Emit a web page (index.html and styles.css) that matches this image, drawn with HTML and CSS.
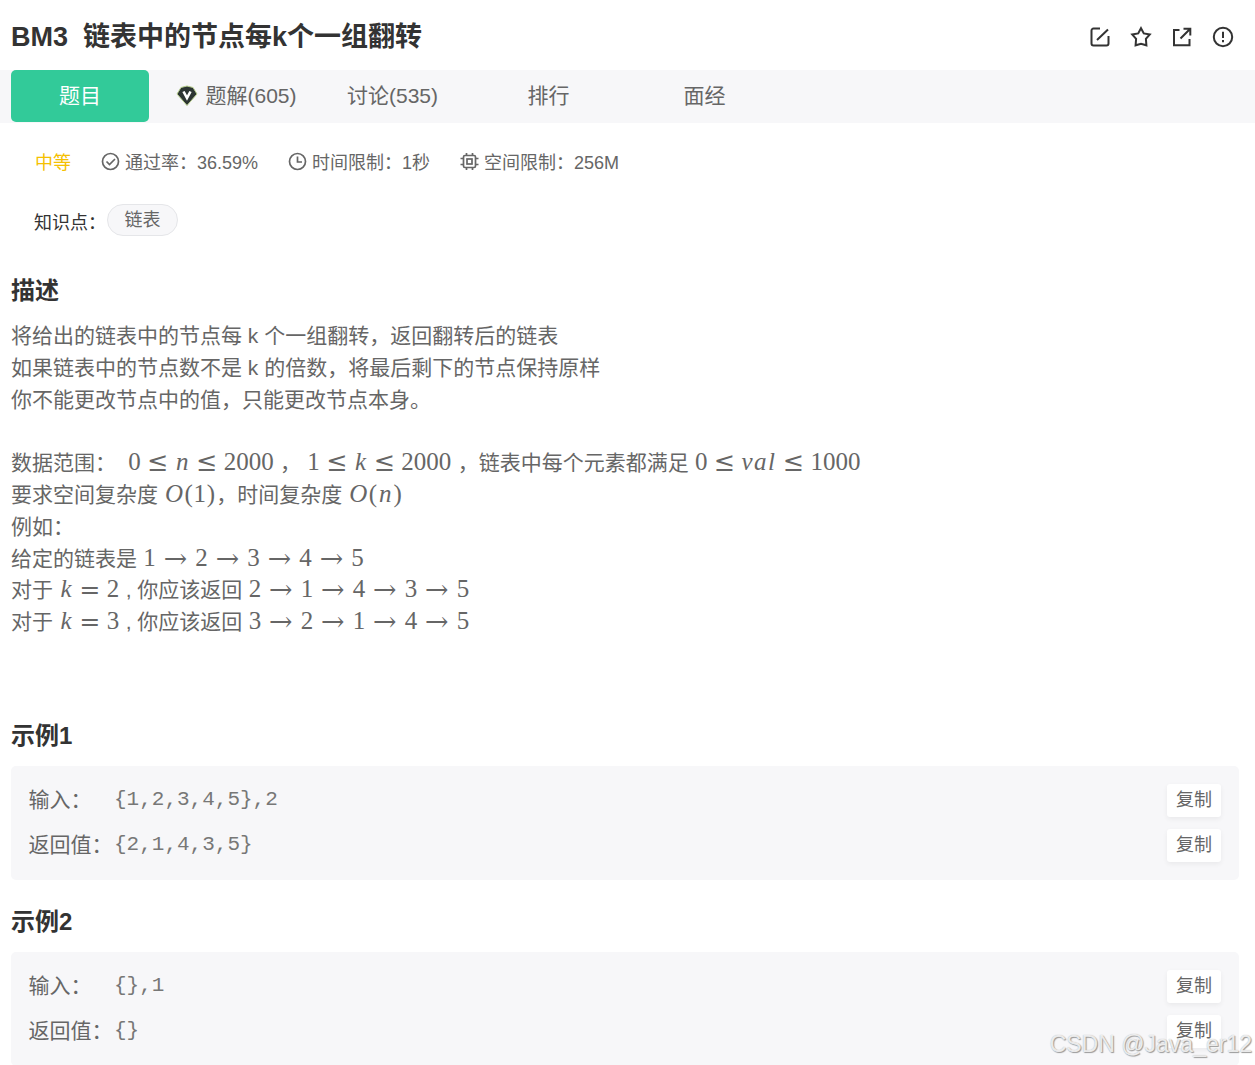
FILE: index.html
```html
<!DOCTYPE html>
<html lang="zh-CN">
  <head>
    <title>BM3 链表中的节点每k个一组翻转</title>
    <meta charset="utf-8">
    <link rel="stylesheet" href="styles.css">
  </head>
  <body>

  <div class="header">
    <h1>BM3&nbsp; 链表中的节点每k个一组翻转</h1>
    <div class="actions">
      <svg width="22" height="22" viewBox="0 0 22 22"><path d="M11 2.5H4.5a2 2 0 0 0-2 2v13a2 2 0 0 0 2 2h13a2 2 0 0 0 2-2V10M8 14L19 3.5"/></svg>
      <svg width="22" height="22" viewBox="0 0 22 22"><path d="M11 2.2l2.8 5.2 6 1.1-3.9 4.4.5 6.4-5.4-1.5-5.4 1.5.5-6.4-3.9-4.4 6-1.1z"/></svg>
      <svg width="22" height="22" viewBox="0 0 22 22"><path d="M8.5 4H3v15.3h15.5V13M12.5 2.7h6.8v6.8M19 3L9.5 12.5"/></svg>
      <svg width="22" height="22" viewBox="0 0 22 22"><circle cx="11" cy="11" r="9.2"/><path d="M11 5.800v6.200M11 14v2.200"/></svg>
    </div>
  </div>

  <div class="tabs">
    <span class="tab active">题目</span>
    <span class="tab">
      <svg class="gem" width="22" height="22" viewBox="0 0 22 22"><path fill="#2d3533" stroke="#b8cf8f" d="M5 2.500L11 1l6 1.500L21 9 11 20.500 1 9z"/><path fill="none" stroke="#fff" stroke-width="2.600" d="M7.500 6.500L11 13l3.500-6.500"/></svg>
      题解(605)
    </span>
    <span class="tab">讨论(535)</span>
    <span class="tab">排行</span>
    <span class="tab">面经</span>
  </div>

  <div class="meta">
    <span class="level">中等</span>
    <span class="item">
      <svg width="19" height="19" viewBox="0 0 19 19"><circle cx="9.5" cy="9.5" r="8"/><path d="M5.5 9.5l3 3 5.5-5.5"/></svg>
      通过率：36.59%
    </span>
    <span class="item">
      <svg width="19" height="19" viewBox="0 0 19 19"><circle cx="9.5" cy="9.5" r="8"/><path d="M9.5 4.500v5.500h4.500"/></svg>
      时间限制：1秒
    </span>
    <span class="item">
      <svg width="19" height="19" viewBox="0 0 19 19"><rect x="3.5" y="3.5" width="12" height="12" rx="1.5"/><rect x="7" y="7" width="5" height="5"/><path d="M6.5 1v2M12.5 1v2M6.5 16v2M12.5 16v2M.5 6.500h2.500M.5 12.500h2.500M16 6.500h2.500M16 12.500h2.500"/></svg>
      空间限制：256M
    </span>
  </div>

  <div class="points">
    <span>知识点：</span>
    <span class="tag">链表</span>
  </div>

  <h2>描述</h2>
  <div class="desc">
    <p>将给出的链表中的节点每 k 个一组翻转，返回翻转后的链表</p>
    <p>如果链表中的节点数不是 k 的倍数，将最后剩下的节点保持原样</p>
    <p>你不能更改节点中的值，只能更改节点本身。</p>
    <p>&nbsp;</p>
    <!-- formulas -->
    <p>数据范围：&nbsp; <span class="math">0<b>≤</b><i class="n">n</i><b>≤</b>2000</span> ， <span class="math">1<b>≤</b><i class="k">k</i><b>≤</b>2000</span> ，链表中每个元素都满足 <span class="math">0<b>≤</b><i class="val">val</i><b>≤</b>1000</span></p>
    <p>要求空间复杂度 <span class="math"><i class="o">O</i><em>(</em>1<em>)</em></span>，时间复杂度 <span class="math"><i class="o">O</i><em>(</em><i class="n">n</i><em>)</em></span></p>
    <p>例如：</p>
    <p>给定的链表是 <span class="math">1<u>→</u>2<u>→</u>3<u>→</u>4<u>→</u>5</span></p>
    <p>对于 <span class="math"><i class="k">k</i><b>=</b>2</span> , 你应该返回 <span class="math">2<u>→</u>1<u>→</u>4<u>→</u>3<u>→</u>5</span></p>
    <p>对于 <span class="math"><i class="k">k</i><b>=</b>3</span> , 你应该返回 <span class="math">3<u>→</u>2<u>→</u>1<u>→</u>4<u>→</u>5</span></p>
  </div>

  <h2>示例1</h2>
  <div class="sample">
    <div class="row"><span class="label">输入：</span><code>{1,2,3,4,5},2</code><span class="copy">复制</span></div>
    <div class="row"><span class="label">返回值：</span><code>{2,1,4,3,5}</code><span class="copy">复制</span></div>
  </div>

  <h2>示例2</h2>
  <div class="sample">
    <div class="row"><span class="label">输入：</span><code>{},1</code><span class="copy">复制</span></div>
    <div class="row"><span class="label">返回值：</span><code>{}</code><span class="copy">复制</span></div>
  </div>

  <div class="watermark">CSDN @Java_er12</div>

  </body>
</html>
```
FILE: styles.css
```css
html {
  height: 100%;
}
body {
  margin: 0;
  height: 1065px;
  overflow: hidden;
  position: relative;
  background: #fff;
  color: #666;
  font-family: "Liberation Sans", "Noto Sans CJK SC", sans-serif;
  font-size: 21px;
}

svg {
  flex: none;
  fill: none;
  stroke: #333;
  stroke-width: 2;
}

.header {
  display: flex;
  justify-content: space-between;
  align-items: center;
  height: 70px;
  padding: 3px 21.5px 0 11px;
  box-sizing: border-box;
}
h1 {
  margin: 0;
  color: #333;
  font-size: 27px;
  line-height: 40px;
}
.actions {
  display: flex;
  gap: 18.7px;
}

.tabs {
  display: flex;
  gap: 18px;
  height: 53px;
  padding-left: 11px;
  background: #f7f7f9;
}
.tab {
  display: flex;
  justify-content: center;
  align-items: center;
  gap: 7px;
  width: 139px;
  margin-right: -1px;
  height: 52px;
  padding-bottom: 4px;
  box-sizing: border-box;
  white-space: nowrap;
}
.tab.active {
  width: 138px;
  margin-right: 0;
  background: #32ca99;
  border-radius: 5px;
  color: #fff;
}
.gem {
  stroke-width: 1;
  margin-top: 4px;
}

.meta {
  display: flex;
  align-items: center;
  height: 23px;
  margin-top: 26px;
  padding: 0 0 4px 35px;
  gap: 30px;
  font-size: 18px;
}
.meta .item {
  display: flex;
  align-items: center;
  gap: 5px;
}
.meta svg {
  stroke: #666;
  stroke-width: 1.7;
  margin-top: 1px;
}
.level {
  color: #f5c000;
}

.points {
  display: flex;
  align-items: flex-start;
  height: 38px;
  margin: 28px 0 7px;
  padding-left: 34px;
  font-size: 18px;
  line-height: 38px;
  color: #333;
}
.tag {
  width: 69px;
  height: 30px;
  margin-left: 1px;
  border: 1px solid #e5e6e9;
  border-radius: 16px;
  background: #f7f7f9;
  color: #666;
  line-height: 30px;
  text-align: center;
}

h2 {
  margin: 0;
  padding: 24px 0 0 11px;
  height: 36px;
  color: #333;
  font-size: 24px;
  line-height: 36px;
}

.desc {
  height: 374px;
  padding: 11px 0 0 11px;
}
.desc p {
  margin: 0;
  height: 31.8px;
  line-height: 31.8px;
  white-space: nowrap;
}
.math {
  margin: 0 0.5px;
  font-family: "Liberation Serif", serif;
  font-size: 25px;
  line-height: 1;
}
.math i, .math b, .math u, .math em {
  display: inline-block;
  font-weight: normal;
  text-align: center;
  text-decoration: none;
}
.math b, .math u {
  margin: 0 7px;
  font-family: "DejaVu Math TeX Gyre", "DejaVu Serif", serif;
}
.math b {
  width: 20px;
}
.math u {
  width: 25.5px;
}
.math em {
  width: 9.7px;
  font-style: normal;
}
.math .n {
  width: 15px;
}
.math .k {
  width: 13.5px;
}
.math .o {
  width: 19.5px;
}
.math .val {
  width: 35px;
  letter-spacing: 1.5px;
}

.sample {
  height: 114px;
  margin: 12px 16px 0 11px;
  padding: 18px 18px 0 17.5px;
  box-sizing: border-box;
  background: #f7f7f9;
  border-radius: 5px;
}
.row {
  display: flex;
  align-items: center;
  height: 33px;
  margin-bottom: 12px;
}
.label {
  width: 85.5px;
  margin-bottom: 6px;
}
code {
  margin-bottom: 2px;
  color: #777;
  font-family: "Liberation Mono", monospace;
  font-size: 21px;
}
.copy {
  width: 54px;
  height: 33px;
  margin-left: auto;
  background: #fff;
  border-radius: 3px;
  box-shadow: 0 2px 5px rgba(0,0,0,0.06);
  font-size: 18px;
  line-height: 32px;
  text-align: center;
}

.watermark {
  position: absolute;
  right: 3px;
  bottom: 6px;
  color: rgba(255,255,255,0.8);
  font-size: 23px;
  line-height: 30px;
  text-shadow: 1px 1px 1px #999, 0 0 1px #aaa;
}
```
